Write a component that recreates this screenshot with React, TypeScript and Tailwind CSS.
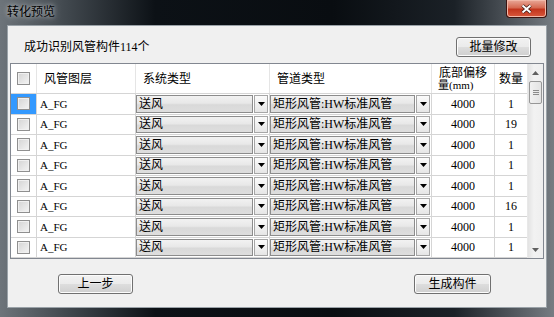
import React from "react";

const counts = [1, 19, 1, 1, 1, 16, 1, 1];

const font = "font-['Liberation_Serif','Noto_Sans_CJK_SC',serif]";

function Checkbox() {
    return (
        <span className="block w-[13px] h-[13px] border border-[#8f8f8f] bg-[linear-gradient(135deg,#d4d4d4,#f4f4f4)] shadow-[inset_0_0_0_1px_#f0f0f0]" />
    );
}

function Arrow({ up = false, color = "#000" }: { up?: boolean; color?: string }) {
    return (
        <svg width="7" height="4" viewBox="0 0 7 4">
            <path d={up ? "M0 4 L7 4 L3.5 0 Z" : "M0 0 L7 0 L3.5 4 Z"} fill={color} />
        </svg>
    );
}

function Combo({ text }: { text: string }) {
    return (
        <div className="flex h-full items-stretch gap-px py-px pr-px">
            <div className="flex-1 flex items-center pl-[2px] border border-[#8c8c8c] bg-[linear-gradient(#f2f2f2,#e8e8e8_45%,#d9d9d9_55%,#dedede)] text-black">
                {text}
            </div>
            <div className="w-[14px] flex items-center justify-center border border-[#a6a6a6] bg-[linear-gradient(#fbfbfb,#e6e6e6)]">
                <Arrow />
            </div>
        </div>
    );
}

function WinButton({ label, className }: { label: string; className?: string }) {
    return (
        <button
            type="button"
            className={
                "h-[20px] flex items-center justify-center rounded-[3px] border border-[#707070] bg-[linear-gradient(#f2f2f2,#ebebeb_48%,#dddddd_52%,#cfcfcf)] shadow-[inset_0_0_0_1px_#fcfcfc] text-[12px] text-black " +
                (className ?? "")
            }
        >
            {label}
        </button>
    );
}

export default function App() {
    return (
        <div className={"w-[554px] h-[317px] flex flex-col bg-[linear-gradient(90deg,#6d747a_0%,#41484e_12%,#0c1116_28%,#090d11_60%,#1b2127_82%,#767c82_100%)] " + font}>
            {/* title bar */}
            <div className="h-[25px] flex items-start justify-between">
                <span className="pl-[7px] pt-[5px] text-[12px] leading-[14px] text-[#000] [text-shadow:0_0_4px_#c8ccd0,0_0_8px_#9aa0a6]">
                    转化预览
                </span>
                <div className="mr-[7px] w-[41px] h-[18px] flex items-center justify-center rounded-b-[4px] border border-t-0 border-[#3b1410] bg-[linear-gradient(#e9a898,#d66a52_45%,#c2351d_55%,#d9583c)] shadow-[inset_0_0_0_1px_#f1b8a8]">
                    <svg width="11" height="10" viewBox="0 0 11 10">
                        <path d="M1.5 1.5 L9.5 8.5 M9.5 1.5 L1.5 8.5" stroke="#3c1a14" strokeWidth="3.6" />
                        <path d="M1.5 1.5 L9.5 8.5 M9.5 1.5 L1.5 8.5" stroke="#ffffff" strokeWidth="2" />
                    </svg>
                </div>
            </div>

            {/* client area */}
            <div className="mx-[7px] h-[283px] bg-[#f0f0f0] border border-[#9aa2a8] flex flex-col text-[12px] text-black">
                <div className="mt-[11px] h-[20px] flex items-center justify-between pl-[16px] pr-[15px]">
                    <span>成功识别风管构件114个</span>
                    <WinButton label="批量修改" className="w-[75px]" />
                </div>

                {/* table */}
                <div className="mt-[6px] mx-[2px] h-[196px] flex border border-[#828790] bg-white">
                    <div className="w-[516px] flex flex-col">
                        <div className="h-[30px] flex border-b border-[#d5d5d5] bg-white">
                            <div className="w-[26px] flex items-center justify-center border-r border-[#e5e5e5]">
                                <Checkbox />
                            </div>
                            <div className="w-[99px] flex items-center pl-[7px] border-r border-[#e5e5e5]">风管图层</div>
                            <div className="w-[134px] flex items-center pl-[7px] border-r border-[#e5e5e5]">系统类型</div>
                            <div className="w-[162px] flex items-center pl-[7px] border-r border-[#e5e5e5]">管道类型</div>
                            <div className="w-[63px] flex flex-col items-center justify-center border-r border-[#e5e5e5] leading-[12px]">
                                <span>底部偏移</span>
                                <span className="self-start pl-[6px] text-[11px]">量(mm)</span>
                            </div>
                            <div className="w-[32px] flex items-center justify-center">数量</div>
                        </div>
                        {counts.map((n, i) => (
                            <div key={i} className="h-[20.5px] flex border-b border-[#d5d5d5]">
                                <div
                                    className={
                                        "w-[26px] flex items-center justify-center border-r border-[#d5d5d5] " +
                                        (i === 0 ? "bg-[#3399ff]" : "")
                                    }
                                >
                                    <Checkbox />
                                </div>
                                <div className="w-[99px] flex items-center pl-[3px] border-r border-[#d5d5d5] text-[11px]">A_FG</div>
                                <div className="w-[134px] border-r border-[#d5d5d5]">
                                    <Combo text="送风" />
                                </div>
                                <div className="w-[162px] border-r border-[#d5d5d5]">
                                    <Combo text="矩形风管:HW标准风管" />
                                </div>
                                <div className="w-[63px] flex items-center justify-center border-r border-[#d5d5d5]">4000</div>
                                <div className="w-[32px] flex items-center justify-center">{n}</div>
                            </div>
                        ))}
                    </div>

                    {/* scrollbar */}
                    <div className="w-[16px] flex flex-col bg-[linear-gradient(90deg,#e3e3e3,#f2f2f2_40%,#eeeeee)] border-l border-[#e8e8e8]">
                        <div className="h-[17px] flex items-center justify-center">
                            <Arrow up color="#606060" />
                        </div>
                        <div className="mx-px h-[23px] rounded-[2px] border border-[#979797] bg-[linear-gradient(90deg,#f1f1f1,#e3e3e3)] flex flex-col items-center justify-center gap-[1px]">
                            <span className="block w-[6px] h-px bg-[#8a8a8a]" />
                            <span className="block w-[6px] h-px bg-[#8a8a8a]" />
                            <span className="block w-[6px] h-px bg-[#8a8a8a]" />
                        </div>
                        <div className="flex-1" />
                        <div className="h-[17px] flex items-center justify-center">
                            <Arrow color="#606060" />
                        </div>
                    </div>
                </div>

                <div className="mt-[15px] flex pl-[50px]">
                    <WinButton label="上一步" className="w-[75px]" />
                    <WinButton label="生成构件" className="w-[77px] ml-[281px]" />
                </div>
            </div>
        </div>
    );
}
